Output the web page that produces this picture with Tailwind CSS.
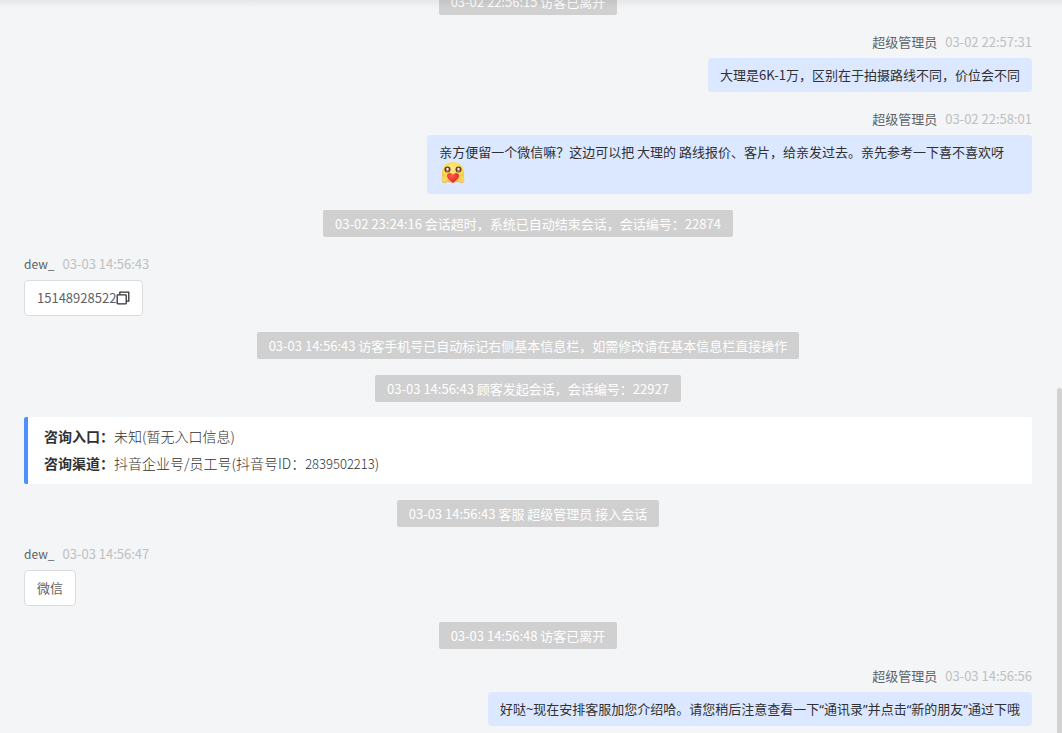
<!DOCTYPE html>
<html lang="zh-CN">
<head>
<meta charset="utf-8">
<meta name="viewport" content="width=device-width, initial-scale=1">
<title>会话记录</title>
<script src="https://cdn.jsdelivr.net/npm/@tailwindcss/browser@4"></script>
</head>
<body class="bg-[#f3f5f7] font-['Noto_Sans_CJK_SC',sans-serif] text-[13px] leading-[18px] text-[#303133]">
<div class="relative h-screen overflow-hidden">
  <main class="-mt-3 flex flex-col gap-4 pl-6 pr-[30px]">
    <p class="self-center rounded-xs bg-[#d0d0d0] px-3 pt-[5px] pb-1 text-white">03-02 22:56:15 访客已离开</p>

    <article class="flex flex-col items-end">
      <header class="mb-[5px] flex gap-2 leading-[22px]"><span class="text-[#606266]">超级管理员</span><time class="text-[#c0c0c0]">03-02 22:57:31</time></header>
      <p class="rounded bg-[#dce8ff] px-3 py-2">大理是6K-1万，区别在于拍摄路线不同，价位会不同</p>
    </article>

    <article class="flex flex-col items-end">
      <header class="mb-[5px] flex gap-2 leading-[22px]"><span class="text-[#606266]">超级管理员</span><time class="text-[#c0c0c0]">03-02 22:58:01</time></header>
      <div class="w-3/5 rounded bg-[#dce8ff] px-3 py-2">
        <p class="whitespace-nowrap">亲方便留一个微信嘛？这边可以把 大理的 路线报价、客片，给亲发过去。亲先参考一下喜不喜欢呀</p>
        <svg class="ml-0.5 h-[25px] w-6" viewBox="0 0 24 25" role="img" aria-label="爱心">
          <defs>
            <radialGradient id="face" cx=".5" cy=".3" r=".75"><stop offset="0" stop-color="#ffe984"/><stop offset=".6" stop-color="#fbd850"/><stop offset="1" stop-color="#eba941"/></radialGradient>
            <radialGradient id="heart" cx=".4" cy=".3" r=".8"><stop offset="0" stop-color="#ff5b50"/><stop offset="1" stop-color="#dc1719"/></radialGradient>
          </defs>
          <path d="M1 13C1 5 5 1 12 1s11 4 11 12c0 6-4 8.500-11 8.500S1 19 1 13Z" fill="url(#face)"/>
          <circle cx="6.500" cy="8.500" r="3" fill="#6a3520"/><circle cx="17.500" cy="8.500" r="3" fill="#6a3520"/>
          <circle cx="6.500" cy="9.500" r="1.500" fill="#a8765c"/><circle cx="17.500" cy="9.500" r="1.500" fill="#a8765c"/>
          <circle cx="6.500" cy="8" r="1.200" fill="#fff"/><circle cx="17.500" cy="8" r="1.200" fill="#fff"/>
          <path d="M12 22C8 19 6 17 6 14.800c0-3.600 4.500-3.800 6-.9 1.500-2.900 6-2.700 6 .9 0 2.200-2 4.200-6 7.200Z" fill="url(#heart)"/>
          <ellipse cx="3.500" cy="18.500" rx="3" ry="3.200" fill="#fbd55d"/><ellipse cx="20.500" cy="18.500" rx="3" ry="3.200" fill="#fbd55d"/>
          <path d="M1.200 20.700c1.500 1.300 3.500 1.200 5-.4M17.800 20.300c1.500 1.600 3.500 1.700 5 .4" fill="none" stroke="#e9a948" stroke-width=".8"/>
        </svg>
      </div>
    </article>

    <p class="self-center rounded-xs bg-[#d0d0d0] px-3 pt-[5px] pb-1 text-white">03-02 23:24:16 会话超时，系统已自动结束会话，会话编号：22874</p>

    <article class="flex flex-col items-start">
      <header class="mb-[5px] flex gap-2 leading-[22px]"><span class="text-xs leading-[22px] text-[#606266]">dew_</span><time class="text-[#c0c0c0]">03-03 14:56:43</time></header>
      <div class="flex items-center rounded border border-[#dcdcdc] bg-white px-3 py-2 text-[#606266]">
        <span>15148928522</span>
        <button type="button" aria-label="复制" class="cursor-pointer text-[#303133]">
          <svg class="size-[14px]" viewBox="0 0 14 14" fill="none" stroke="currentColor" stroke-width="1.300" stroke-linejoin="round"><rect x="1.200" y="3.800" width="9" height="9" rx=".6"/><path d="M3.800 3.500V1.200h9v9h-2.300"/></svg>
        </button>
      </div>
    </article>

    <p class="self-center rounded-xs bg-[#d0d0d0] px-3 pt-[5px] pb-1 text-white">03-03 14:56:43 访客手机号已自动标记右侧基本信息栏，如需修改请在基本信息栏直接操作</p>
    <p class="self-center rounded-xs bg-[#d0d0d0] px-3 pt-[5px] pb-1 text-white">03-03 14:56:43 顾客发起会话，会话编号：22927</p>

    <dl class="-mt-px rounded-xs border-l-4 border-[#4d90fe] bg-white px-4 pt-1.5 pb-[7px] text-sm leading-[27px]">
      <div class="flex"><dt class="font-bold">咨询入口：</dt><dd class="font-light">未知(暂无入口信息)</dd></div>
      <div class="flex"><dt class="font-bold">咨询渠道：</dt><dd class="font-light">抖音企业号/员工号(抖音号ID：<span class="text-[13px]">2839502213</span>)</dd></div>
    </dl>

    <p class="self-center rounded-xs bg-[#d0d0d0] px-3 pt-[5px] pb-1 text-white">03-03 14:56:43 客服 超级管理员 接入会话</p>

    <article class="flex flex-col items-start">
      <header class="mb-[5px] flex gap-2 leading-[22px]"><span class="text-xs leading-[22px] text-[#606266]">dew_</span><time class="text-[#c0c0c0]">03-03 14:56:47</time></header>
      <p class="rounded border border-[#dcdcdc] bg-white px-3 py-2 text-[#606266]">微信</p>
    </article>

    <p class="self-center rounded-xs bg-[#d0d0d0] px-3 pt-[5px] pb-1 text-white">03-03 14:56:48 访客已离开</p>

    <article class="flex flex-col items-end">
      <header class="mb-[5px] flex gap-2 leading-[22px]"><span class="text-[#606266]">超级管理员</span><time class="text-[#c0c0c0]">03-03 14:56:56</time></header>
      <p class="rounded bg-[#dce8ff] px-3 py-2 font-['Noto_Sans','Noto_Sans_CJK_SC',sans-serif]">好哒~现在安排客服加您介绍哈。请您稍后注意查看一下“通讯录”并点击“新的朋友”通过下哦</p>
    </article>
  </main>

  <div class="absolute inset-x-0 top-0 h-2 bg-linear-to-b from-black/6 to-transparent"></div>
  <div class="absolute right-0 bottom-0 top-[388px] w-[5px] rounded-t bg-[#d2d2d2]"></div>
</div>
</body>
</html>
